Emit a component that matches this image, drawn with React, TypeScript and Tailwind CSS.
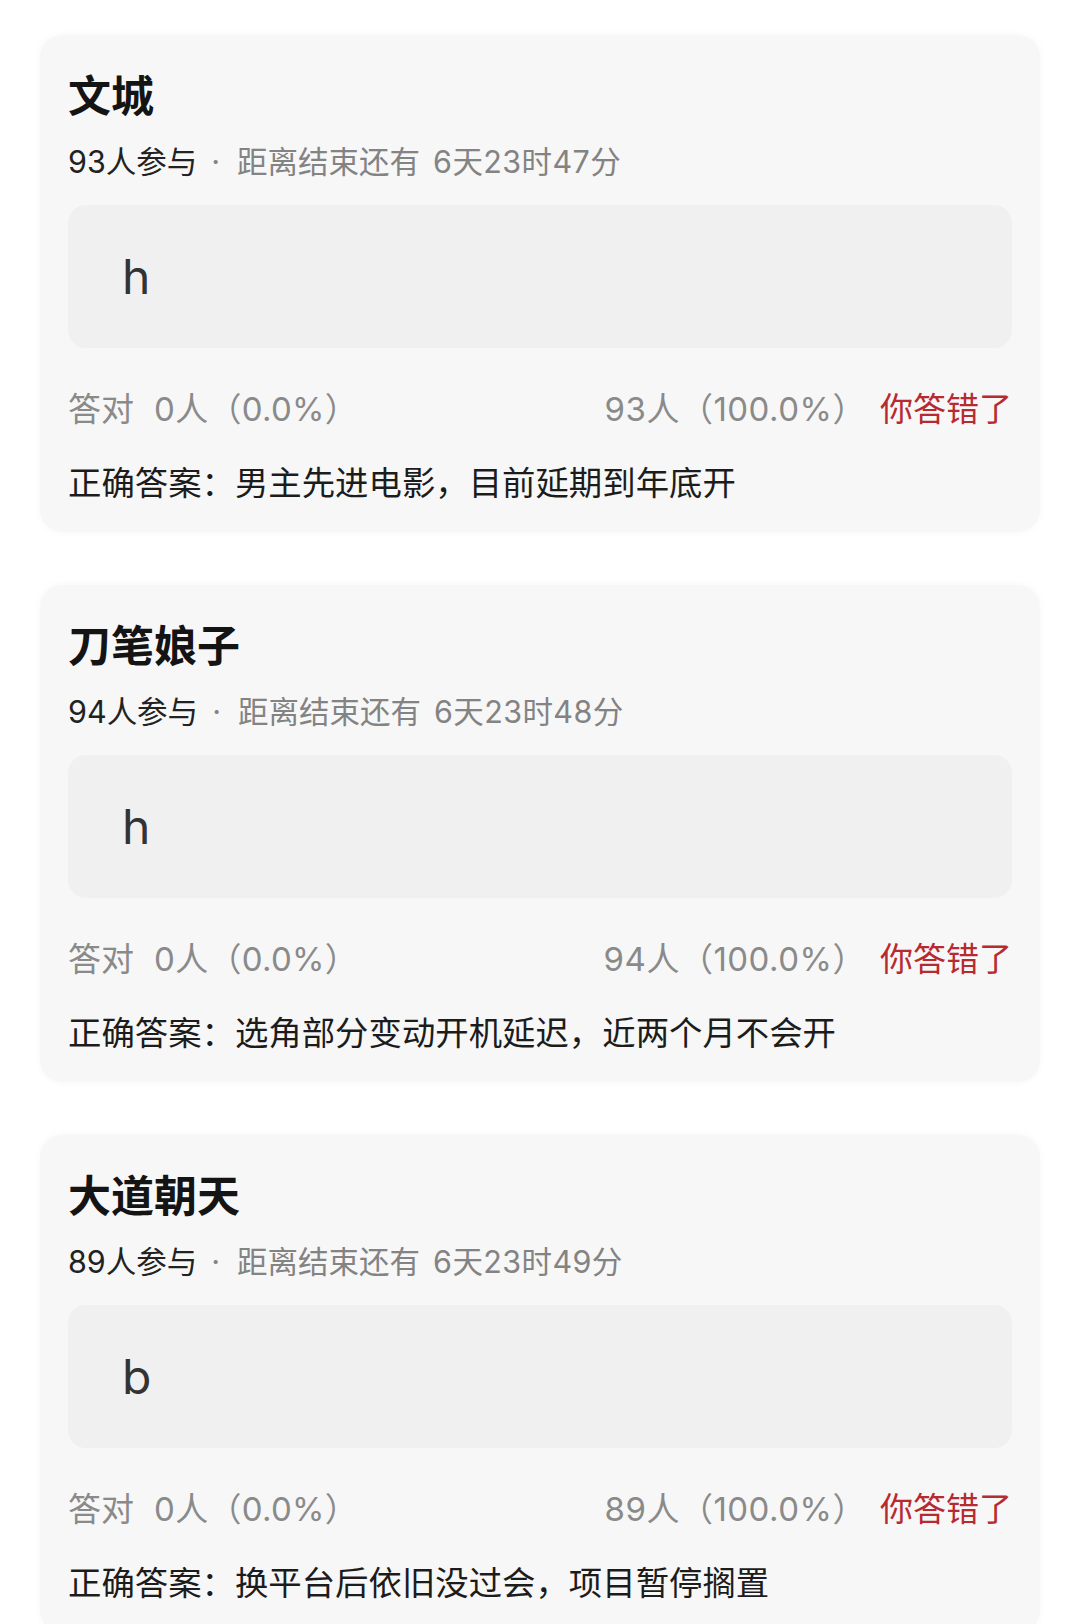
import React from 'react';

interface Quiz {
  title: string;
  joined: number;
  remaining: string;
  answer: string;
  correct: number;
  wrong: number;
  answerLine: string;
}

const quizzes: Quiz[] = [
  {
    title: '文城',
    joined: 93,
    remaining: '6天23时47分',
    answer: 'h',
    correct: 0,
    wrong: 93,
    answerLine: '男主先进电影，目前延期到年底开',
  },
  {
    title: '刀笔娘子',
    joined: 94,
    remaining: '6天23时48分',
    answer: 'h',
    correct: 0,
    wrong: 94,
    answerLine: '选角部分变动开机延迟，近两个月不会开',
  },
  {
    title: '大道朝天',
    joined: 89,
    remaining: '6天23时49分',
    answer: 'b',
    correct: 0,
    wrong: 89,
    answerLine: '换平台后依旧没过会，项目暂停搁置',
  },
];

const pct = (n: number, total: number) => ((n / total) * 100).toFixed(1) + '%';

const QuizCard = ({ quiz }: { quiz: Quiz }) => {
  const total = quiz.correct + quiz.wrong;
  return (
    <div className="rounded-[22px] bg-[#f7f7f7] px-[28px] pt-[36px] pb-[27px] shadow-[0_0_8px_rgba(0,0,0,0.035)]">
      <h2 className="text-[43px] leading-[50px] font-bold text-[#141414]">{quiz.title}</h2>
      <div className="mt-[21px] flex items-center text-[30.5px] leading-[40px] text-[#838383]">
        <span className="text-[#222]">{quiz.joined}人参与</span>
        <span className="ml-[14px] mr-[17px]">·</span>
        <span>距离结束还有</span>
        <span className="ml-[13px] tracking-[0.4px]">{quiz.remaining}</span>
      </div>
      <div className="mt-[23px] flex h-[143px] items-center rounded-[18px] bg-[#f0f0f0] pl-[54px]">
        <span className="text-[48px] text-[#333]">{quiz.answer}</span>
      </div>
      <div className="mt-[39px] flex items-center justify-between text-[33px] leading-[44px] text-[#8a8a8a]">
        <span className="flex items-center">
          <span>答对</span>
          <span className="ml-[20px] tracking-[0.3px]">
            {quiz.correct}人（{pct(quiz.correct, total)}）
          </span>
        </span>
        <span className="flex items-center">
          <span className="tracking-[0.5px]">
            {quiz.wrong}人（{pct(quiz.wrong, total)}）
          </span>
          <span className="ml-[14px] text-[#b62a30]">你答错了</span>
        </span>
      </div>
      <div className="mt-[30px] text-[33.4px] leading-[44px] text-[#1c1c1c]">
        正确答案：{quiz.answerLine}
      </div>
    </div>
  );
};

export default function App() {
  return (
    <div className="h-[1624px] overflow-hidden bg-white pt-[35px] pl-[40px] pr-[37px] font-['Inter','Noto_Sans_CJK_SC',sans-serif]">
      <div className="flex flex-col gap-[53px]">
        {quizzes.map((q) => (
          <QuizCard key={q.title} quiz={q} />
        ))}
      </div>
    </div>
  );
}
